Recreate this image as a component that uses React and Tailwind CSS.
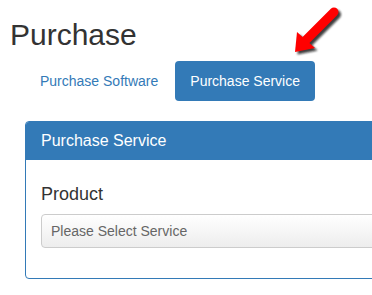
export default function App() {
  return (
    <div
      className="relative w-[372px] h-[295px] overflow-hidden bg-white text-[#333]"
      style={{ fontFamily: '"Liberation Sans", Arial, sans-serif' }}
    >
      <h1 className="ml-[10px] mt-[18px] text-[30px] leading-[33px] font-normal text-[#333]">
        Purchase
      </h1>
      <div className="ml-[25px] mt-[10px] flex gap-[2px]">
        <div className="h-[40px] px-[15px] flex items-center text-[14px] text-[#337ab7] rounded-[4px]">
          Purchase Software
        </div>
        <div className="h-[40px] px-[15px] flex items-center text-[14px] text-white bg-[#337ab7] rounded-[4px]">
          Purchase Service
        </div>
      </div>
      <div className="ml-[25px] mt-[20px] w-[420px] border border-[#337ab7] rounded-[4px] overflow-hidden">
        <div className="bg-[#337ab7] px-[15px] pt-[10px] pb-[10px] text-[16px] leading-[18px] text-white">
          Purchase Service
        </div>
        <div className="px-[15px] pt-[24px] pb-[30px]">
          <div className="text-[18px] leading-[20px] text-[#333] mb-[10px]">Product</div>
          <div className="h-[34px] w-[380px] flex items-center pl-[9px] border border-[#ccc] rounded-[4px] bg-gradient-to-b from-white to-[#ededed] text-[14px] text-[#666]">
            Please Select Service
          </div>
        </div>
      </div>
      <svg
        className="absolute left-[280px] top-0"
        width="70"
        height="60"
        viewBox="280 0 70 60"
      >
        <defs>
          <filter id="sh" x="-30%" y="-30%" width="160%" height="160%">
            <feGaussianBlur stdDeviation="1.2" />
          </filter>
        </defs>
        <g transform="translate(2.5 2.5)" filter="url(#sh)" opacity="0.8">
          <line x1="334" y1="12" x2="306" y2="40" stroke="#111" strokeWidth="9" strokeLinecap="round" />
          <polygon points="295,52 297,32 315,48" fill="#111" />
        </g>
        <line x1="334" y1="12" x2="306" y2="40" stroke="#ff0000" strokeWidth="9" strokeLinecap="round" />
        <polygon points="295,52 297,32 315,48" fill="#ff0000" />
      </svg>
    </div>
  );
}
